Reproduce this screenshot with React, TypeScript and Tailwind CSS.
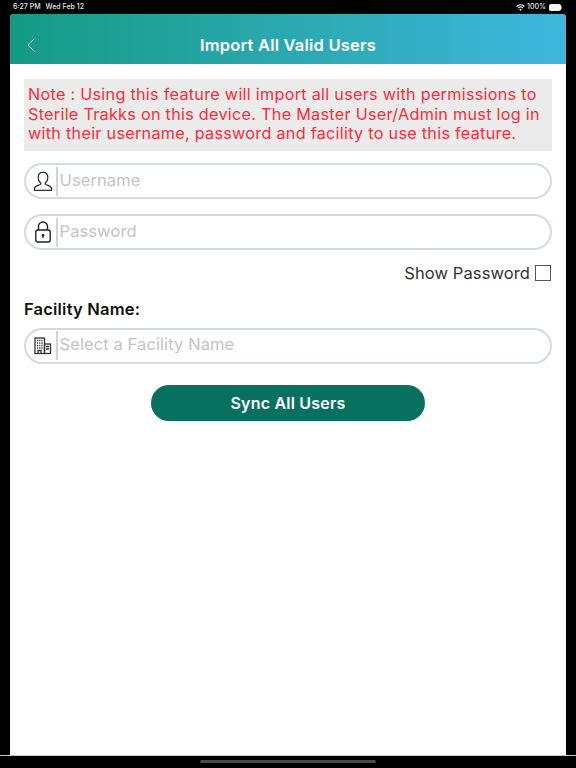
import { ChevronLeft } from "lucide-react";

const font = { fontFamily: "Inter, 'Liberation Sans', sans-serif" };

function UserIcon() {
  return (
    <svg width="20" height="21" viewBox="0 0 22 24" fill="none" stroke="#333" strokeWidth="1.5" strokeLinejoin="round">
      <path d="M11 1.5c-3.4 0-5.5 2.5-5.500 5.800 0 2.600 1 4.800 2.600 6.100.4.4.4 1.500-.2 2-1.400 1-6.200 1.600-6.700 4.600v2.200h19.600V20c-.5-3-5.300-3.600-6.700-4.600-.6-.5-.6-1.600-.2-2 1.600-1.300 2.600-3.500 2.600-6.100 0-3.300-2.100-5.800-5.500-5.800z" />
    </svg>
  );
}

function LockIcon() {
  return (
    <svg width="16" height="22" viewBox="0 0 16 22" fill="none" stroke="#222" strokeWidth="1.4">
      <path d="M3.500 9V5.500a4.500 4.500 0 0 1 9 0V9" />
      <rect x="0.800" y="9" width="14.400" height="12" rx="2" />
      <circle cx="8" cy="14.300" r="1.300" fill="#222" stroke="none" />
      <path d="M8 14.500v2.800" strokeWidth="1.200" />
    </svg>
  );
}

function BuildingIcon() {
  return (
    <svg width="18" height="18" viewBox="0 0 18 18" fill="none" stroke="#333" strokeWidth="1.300">
      <rect x="1" y="1" width="9.500" height="15.500" />
      <rect x="10.500" y="7" width="6" height="9.500" />
      <path d="M3 3.500h1.200M5.200 3.500h1.200M7.400 3.500h1.200M3 6h1.200M5.200 6h1.200M7.400 6h1.200M3 8.500h1.200M5.200 8.500h1.200M7.400 8.500h1.200M3 11h1.200M5.200 11h1.200M7.400 11h1.200M12 9.500h3M12 12h3M4 16.500v-3h3v3" />
    </svg>
  );
}

function Field({ icon, placeholder }: { icon: React.ReactNode; placeholder: string }) {
  return (
    <div className="flex h-[36px] items-center rounded-full border-2 border-[#d5dbde] bg-white">
      <div className="flex w-[30px] shrink-0 justify-center pl-[3px]">{icon}</div>
      <div className="h-[29px] w-[2px] shrink-0 bg-[#d4d4d4]" />
      <span className="mb-[2px] ml-[1.500px] text-[16.500px] tracking-[0.1px] text-[#c4c4c4]">{placeholder}</span>
    </div>
  );
}

export default function App() {
  return (
    <div className="flex h-[768px] w-[576px] flex-col overflow-hidden bg-black" style={font}>
      <div className="flex h-[14px] items-center justify-between pl-[13px] pr-[14px] text-[7px] font-medium text-[#e8e8e8]">
        <div className="flex gap-[5px]">
          <span>6:27 PM</span>
          <span>Wed Feb 12</span>
        </div>
        <div className="flex items-center gap-[2px]">
          <svg width="9" height="7" viewBox="0 0 12 9" fill="#e8e8e8">
            <path d="M6 9 4.200 6.900a2.600 2.600 0 0 1 3.600 0zM3.300 5.900 2.200 4.700a5.600 5.600 0 0 1 7.600 0L8.700 5.900a4 4 0 0 0-5.400 0zM1.300 3.700 0 2.400a8.800 8.800 0 0 1 12 0l-1.300 1.300a7 7 0 0 0-9.400 0z" />
          </svg>
          <span>100%</span>
          <div className="ml-[1px] flex items-center">
            <div className="h-[7px] w-[12px] rounded-[2px] bg-[#f2f2f2]" />
            <div className="h-[3px] w-[1px] bg-[#888]" />
          </div>
        </div>
      </div>

      <div className="mx-[10px] flex h-[741px] flex-col overflow-hidden rounded-t-[4px] bg-white">
        <header className="flex h-[50px] shrink-0 items-center bg-gradient-to-r from-[#149a84] to-[#3fb6de] pt-[12px]">
          <ChevronLeft className="ml-[9px] shrink-0 text-[#d5efe9]" size={24} strokeWidth={1} />
          <h1 className="mr-[33px] flex-1 text-center text-[16.500px] font-semibold tracking-[0.2px] text-white">
            Import All Valid Users
          </h1>
        </header>

        <main className="flex flex-col px-[14px] pt-[15px]">
          <p className="h-[72px] bg-[#ebebeb] px-[4px] pt-[6px] text-[16.200px] leading-[19.500px] tracking-[0.28px] whitespace-nowrap text-[#fb2b37]">
            Note : Using this feature will import all users with permissions to
            <br />
            Sterile Trakks on this device. The Master User/Admin must log in
            <br />
            with their username, password and facility to use this feature.
          </p>

          <div className="mt-[12px]">
            <Field icon={<UserIcon />} placeholder="Username" />
          </div>
          <div className="mt-[15px]">
            <Field icon={<LockIcon />} placeholder="Password" />
          </div>

          <div className="mt-[11px] flex items-center justify-end gap-[5px] pr-[1px]">
            <span className="text-[16.500px] tracking-[0.1px] text-[#333]">Show Password</span>
            <div className="h-[16px] w-[16px] border border-[#555] bg-white" />
          </div>

          <div className="mt-[11px] text-[16.500px] font-semibold tracking-[0.2px] text-[#111]">Facility Name:</div>

          <div className="mt-[6px]">
            <Field icon={<BuildingIcon />} placeholder="Select a Facility Name" />
          </div>

          <button className="mx-auto mt-[21px] h-[36px] w-[274px] rounded-full bg-[#08705f] text-[16px] font-semibold tracking-[0.2px] text-white">
            Sync All Users
          </button>
        </main>
      </div>

      <div className="flex flex-1 justify-center border-t border-[#c8c8c8] pt-[4px]">
        <div className="h-[3px] w-[176px] rounded-full bg-[#4a4a4a]" />
      </div>
    </div>
  );
}
